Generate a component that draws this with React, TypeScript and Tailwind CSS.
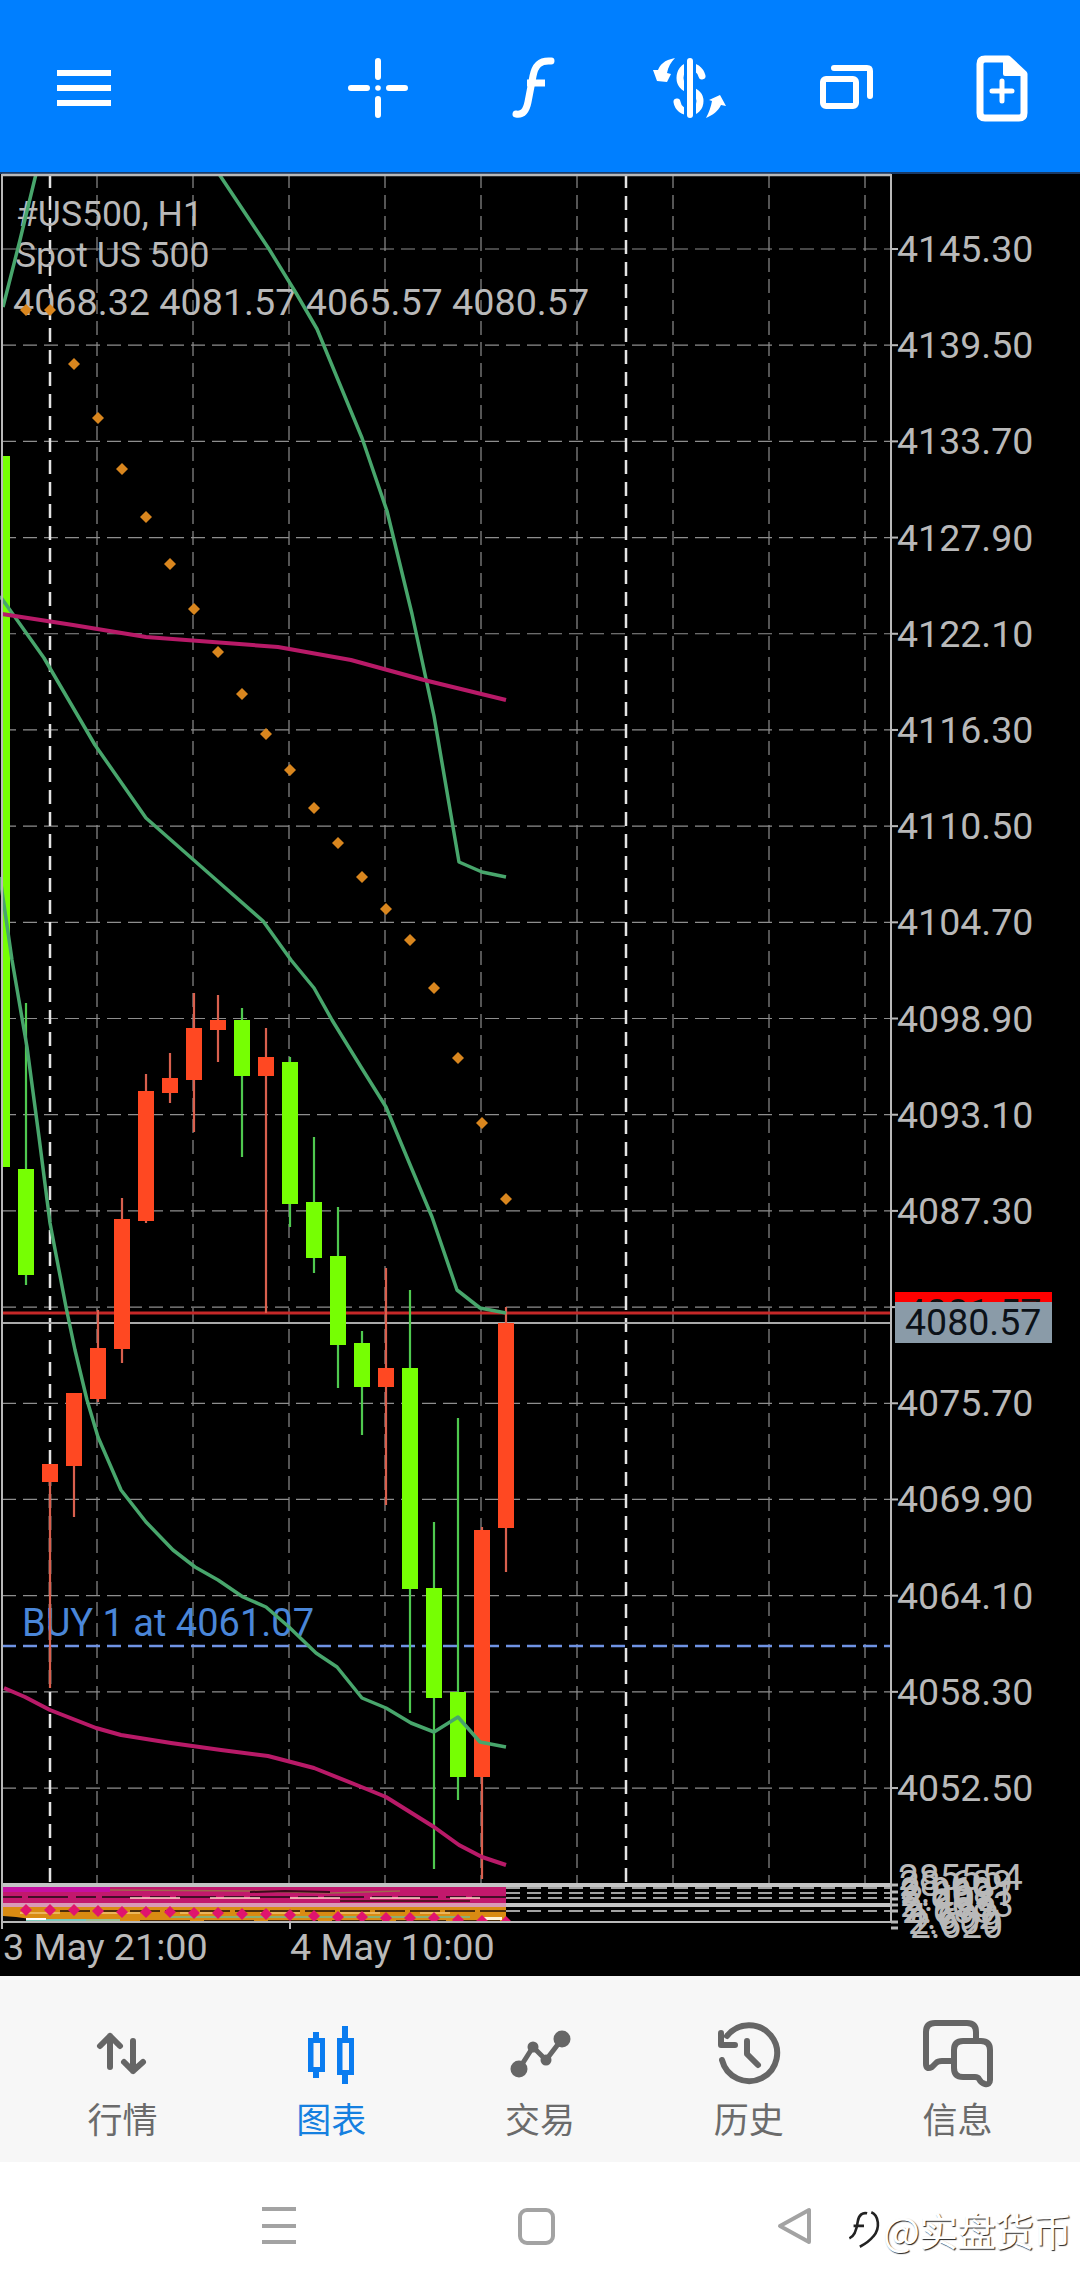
import React from 'react';

const GREEN = '#76ff03';
const RED = '#ff4822';
const GREY = '#b9b9b9';
const BAND = '#48a66c';

// x, body top, body bottom, wick top, wick bottom, up
const candles: [number, number, number, number, number, boolean][] = [
    [26, 1169, 1275, 1003, 1285, true],
    [50, 1464, 1482, 1464, 1688, false],
    [74, 1393, 1466, 1393, 1517, false],
    [98, 1348, 1399, 1310, 1402, false],
    [122, 1219, 1349, 1198, 1363, false],
    [146, 1091, 1221, 1074, 1223, false],
    [170, 1078, 1093, 1053, 1103, false],
    [194, 1028, 1080, 993, 1132, false],
    [218, 1020, 1030, 995, 1062, false],
    [242, 1020, 1076, 1008, 1157, true],
    [266, 1057, 1076, 1028, 1313, false],
    [290, 1062, 1204, 1057, 1227, true],
    [314, 1202, 1258, 1137, 1273, true],
    [338, 1256, 1345, 1207, 1388, true],
    [362, 1343, 1387, 1331, 1435, true],
    [386, 1368, 1387, 1268, 1505, false],
    [410, 1368, 1589, 1290, 1713, true],
    [434, 1588, 1698, 1522, 1869, true],
    [458, 1692, 1777, 1418, 1800, true],
    [482, 1530, 1777, 1527, 1879, false],
    [506, 1323, 1528, 1307, 1572, false],
];

const sarY = [310, 310, 364, 418, 469, 517, 564, 609, 652, 694, 734, 770, 808, 843, 877, 909, 940, 988, 1058, 1123, 1199];
const subDiamondY = [1910, 1910, 1910, 1911, 1912, 1912, 1912, 1913, 1913, 1914, 1914, 1915, 1916, 1917, 1917, 1918, 1918, 1918, 1920, 1921, 1922];

const upperBand = '3,307 20,240 36,174';
const upperBand2 = '219,174 269,249 296,293 317,329 362,438 387,511 412,614 434,716 459,862 482,872 506,877';
const midBand = '0,596 44,658 95,745 146,818 205,870 263,921 291,960 314,988 332,1020 361,1067 386,1107 411,1167 432,1217 457,1290 480,1308 506,1313';
const lowBand = '0,877 12,960 27,1047 39,1137 50,1223 66,1307 75,1350 87,1400 98,1437 121,1490 146,1522 173,1550 195,1567 218,1580 243,1597 266,1607 289,1627 316,1653 337,1667 362,1698 386,1708 411,1723 434,1732 458,1717 480,1742 506,1747';
const pinkTop = '2,614 73,625 146,637 278,647 351,660 424,680 506,700';
const pinkLow = '4,1688 25,1697 50,1710 96,1728 121,1735 171,1743 221,1750 268,1756 314,1768 364,1788 386,1797 434,1827 459,1845 482,1857 506,1865';

const gridYs = Array.from({ length: 17 }, (_, i) => 249 + i * 96.19);
const gridXs = [97, 193, 289, 385, 481, 577, 673, 769, 865];

function Chart() {
    return (
        <svg viewBox="0 172 1080 1804" className="block w-[1080px] h-[1804px] font-['Roboto',sans-serif]">
            <defs>
                <clipPath id="sub">
                    <rect x="2" y="1883" width="889" height="39" />
                </clipPath>
            </defs>
            {/* grid */}
            {gridYs.map((y) => (
                <g key={y}>
                    <line x1="2" x2="890" y1={y} y2={y} stroke="#8e8e8e" strokeWidth="1.2" strokeDasharray="14 7" />
                    <line x1="891" x2="898" y1={y} y2={y} stroke={GREY} strokeWidth="2" />
                </g>
            ))}
            {gridXs.map((x) => (
                <line key={x} x1={x} x2={x} y1="174" y2="1884" stroke="#8e8e8e" strokeWidth="1.2" strokeDasharray="14 7" />
            ))}
            {[50, 626].map((x) => (
                <line key={x} x1={x} x2={x} y1="174" y2="1884" stroke="#e4e4e4" strokeWidth="2.5" strokeDasharray="14 8" />
            ))}

            {/* legend, under the chart lines */}
            <g fill={GREY}>
                <text x="16" y="226" fontSize="35.5">#US500, H1</text>
                <text x="15" y="267" fontSize="35.5">Spot US 500</text>
                <text x="13" y="315" fontSize="37.7">4068.32 4081.57 4065.57 4080.57</text>
            </g>
            <text x="22" y="1636" fontSize="38" fill="#4a86d8">BUY 1 at 4061.07</text>

            {/* order and price lines */}
            <line x1="2" x2="890" y1="1646" y2="1646" stroke="#6f93e4" strokeWidth="2.5" strokeDasharray="14 7" />
            <line x1="2" x2="890" y1="1313" y2="1313" stroke="#c62828" strokeWidth="3" />
            <line x1="2" x2="890" y1="1323" y2="1323" stroke="#a9a9a9" strokeWidth="2" />

            {/* candles */}
            <rect x="2" y="456" width="8" height="711" fill={GREEN} />
            {candles.map(([x, top, bottom, wickTop, wickBottom, up]) => (
                <g key={x}>
                    <line x1={x} x2={x} y1={wickTop} y2={wickBottom} stroke={up ? '#4fc94f' : '#d9604e'} strokeWidth="2.2" />
                    <rect x={x - 8} y={top} width="16" height={bottom - top} fill={up ? GREEN : RED} />
                </g>
            ))}

            {/* indicators */}
            <g fill="none" strokeLinejoin="round">
                <polyline points={upperBand} stroke={BAND} strokeWidth="3.5" />
                <polyline points={upperBand2} stroke={BAND} strokeWidth="3.5" />
                <polyline points={midBand} stroke={BAND} strokeWidth="3.5" />
                <polyline points={lowBand} stroke={BAND} strokeWidth="3.5" />
                <polyline points={pinkTop} stroke="#b81a68" strokeWidth="4" />
                <polyline points={pinkLow} stroke="#b81a68" strokeWidth="4" />
            </g>
            {sarY.map((y, i) => {
                const x = 26 + i * 24;
                return <polygon key={x} points={`${x},${y - 6} ${x + 6},${y} ${x},${y + 6} ${x - 6},${y}`} fill="#d9861e" />;
            })}

            {/* sub window */}
            <g fill="none" stroke="#d8d8d8" strokeWidth="1.5" strokeDasharray="14 7">
                <line x1="506" x2="890" y1="1888" y2="1888" />
                <line x1="506" x2="890" y1="1893" y2="1893" />
                <line x1="506" x2="890" y1="1898" y2="1898" />
                <line x1="506" x2="890" y1="1911" y2="1911" />
            </g>
            <rect x="2" y="1883" width="889" height="4" fill="#c4c4c4" />
            <rect x="2" y="1903" width="889" height="4" fill="#c4c4c4" />
            <rect x="2" y="1887" width="504" height="16" fill="#c2186c" />
            <rect x="2" y="1887" width="108" height="5" fill="#c410a0" />
            <rect x="2" y="1903" width="504" height="4" fill="#d99ab6" />
            <rect x="2" y="1907" width="504" height="15" fill="#d98b12" />
            <polyline points="110,1890 250,1891 330,1893 400,1891" fill="none" stroke="#a0664e" strokeWidth="1.5" />
            <polyline points="250,1892 285,1891 330,1892" fill="none" stroke="#3a0a1a" strokeWidth="2" />
            <line x1="2" x2="506" y1="1897" y2="1897" stroke="#1a0a10" strokeWidth="1.5" strokeDasharray="20 6 40 8" />
            <line x1="130" x2="480" y1="1898" y2="1898" stroke="#ffd8c8" strokeWidth="1.5" strokeDasharray="50 30" />
            <rect x="340" y="1900" width="130" height="2" fill="#5a1028" />
            <line x1="60" x2="506" y1="1911" y2="1911" stroke="#201008" strokeWidth="1.5" strokeDasharray="30 5" />
            <line x1="20" x2="450" y1="1913" y2="1913" stroke="#ffe0a0" strokeWidth="1" strokeDasharray="40 40" />
            <polygon points="3,1921 3,1916 16,1917 45,1921" fill="#0a0a0a" />
            <rect x="26" y="1919" width="60" height="2" fill="#7cc8b8" />
            <rect x="26" y="1918" width="20" height="2" fill="#ffffff" />
            <rect x="86" y="1919" width="34" height="3" fill="#9cc090" />
            <rect x="170" y="1916" width="300" height="2" fill="#8ab070" />
            <line x1="140" x2="500" y1="1921" y2="1921" stroke="#1a0a04" strokeWidth="1.5" strokeDasharray="50 14" />
            <rect x="480" y="1917" width="22" height="3" fill="#fff4d8" />
            <g clipPath="url(#sub)">
                {subDiamondY.map((y, i) => {
                    const x = 26 + i * 24;
                    return <polygon key={x} points={`${x},${y - 6} ${x + 6},${y} ${x},${y + 6} ${x - 6},${y}`} fill="#e0146e" />;
                })}
            </g>

            {/* frame */}
            <rect x="0" y="172" width="1080" height="2" fill="#1a3a66" />
            <line x1="2" x2="891" y1="175" y2="175" stroke={GREY} strokeWidth="2.5" />
            <line x1="2" x2="2" y1="174" y2="1923" stroke={GREY} strokeWidth="2" />
            <line x1="891" x2="891" y1="174" y2="1923" stroke={GREY} strokeWidth="2" />
            <line x1="2" x2="891" y1="1922" y2="1922" stroke={GREY} strokeWidth="2" />
            <line x1="2" x2="2" y1="1923" y2="1929" stroke={GREY} strokeWidth="2" />
            <line x1="290" x2="290" y1="1923" y2="1929" stroke={GREY} strokeWidth="2" />
            {[1885, 1892, 1899, 1905, 1911, 1922, 1928].map((y) => (
                <line key={y} x1="891" x2="898" y1={y} y2={y} stroke={GREY} strokeWidth="3" />
            ))}

            {/* price axis */}
            <g fontSize="37.5" fill={GREY}>
                {gridYs.map((y, i) =>
                    i === 11 ? null : (
                        <text key={y} x="897" y={y + 13}>
                            {(4145.3 - i * 5.8).toFixed(2)}
                        </text>
                    ),
                )}
            </g>
            <g fontSize="37" fill={GREY}>
                <text x="898" y="1890">285554</text>
                <text x="899" y="1896">28.609</text>
                <text x="900" y="1903">2.969</text>
                <text x="900" y="1906">2.6691</text>
                <text x="903" y="1911">2.408</text>
                <text x="900" y="1917">2.9683</text>
                <text x="902" y="1923">2.683</text>
                <text x="906" y="1929">4.692</text>
                <text x="908" y="1934">2.609</text>
                <text x="910" y="1938">2.620</text>
            </g>

            {/* price tags */}
            <rect x="895" y="1292" width="157" height="40" fill="#ff0000" />
            <text x="905" y="1325" fontSize="37.5" fill="#111">4081.57</text>
            <rect x="895" y="1302" width="157" height="41" fill="#8a9ba8" />
            <text x="905" y="1335" fontSize="37.5" fill="#0c1218">4080.57</text>

            {/* time axis */}
            <g fontSize="37.7" fill={GREY}>
                <text x="3" y="1960">3 May 21:00</text>
                <text x="290" y="1960">4 May 10:00</text>
            </g>
        </svg>
    );
}

function Header() {
    return (
        <header className="flex items-center h-[172px] pt-[4px] pl-[57px] bg-[#007fff]">
            <svg viewBox="57 52 54 72" className="w-[54px] h-[72px] fill-white">
                <rect x="57" y="70" width="54" height="6" />
                <rect x="57" y="85" width="54" height="6" />
                <rect x="57" y="100" width="54" height="6" />
            </svg>
            <svg viewBox="346 52 64 72" className="ml-[235px] w-[64px] h-[72px]" fill="none" stroke="#fff" strokeWidth="6" strokeLinecap="round">
                <path d="M351 88H367M389 88H405M378 61V77M378 99V115" />
                <circle cx="378" cy="88" r="2.8" fill="#fff" stroke="none" />
            </svg>
            <svg viewBox="510 52 48 72" className="ml-[100px] w-[48px] h-[72px]" fill="none" stroke="#fff" strokeWidth="7" strokeLinecap="round">
                <path d="M551 61C540 60 535 65 533 76L528 102C526 112 522 115 516 114" />
                <path d="M527 83H545" strokeLinecap="butt" />
            </svg>
            <svg viewBox="650 52 80 72" className="ml-[92px] w-[80px] h-[72px]" fill="none" strokeLinecap="round">
                <path d="M702 76C700 69 694 66 690 66C684 66 680 72 680 78C680 85 684 88 690 90C697 92 700 96 700 101C700 108 695 112 690 112C683 112 678 108 677 102" stroke="#fff" strokeWidth="7" />
                <path d="M690 58V118" stroke="#007fff" strokeWidth="12" strokeLinecap="butt" />
                <path d="M690 61V115" stroke="#fff" strokeWidth="6" />
                <path d="M675 58C664 60 660 65 658 70L653 70L657 81L667 82L671 74L667 73C668 67 671 62 675 58Z" fill="#fff" />
                <path d="M706 118C709 112 711 107 712 101L709 100L720 95L726 106L721 105C718 111 713 115 706 118Z" fill="#fff" />
            </svg>
            <svg viewBox="818 52 58 72" className="ml-[88px] w-[58px] h-[72px]" fill="none" stroke="#fff" strokeWidth="6" strokeLinecap="round" strokeLinejoin="round">
                <rect x="823" y="79" width="33" height="27" rx="3" />
                <path d="M834 68H867Q870 68 870 71V96" />
            </svg>
            <svg viewBox="974 52 56 72" className="ml-[98px] w-[56px] h-[72px]" fill="none" stroke="#fff" strokeLinecap="round" strokeLinejoin="round">
                <path d="M985 59H1008L1024 74V113Q1024 118 1019 118H985Q980 118 980 113V64Q980 59 985 59Z" strokeWidth="7" />
                <path d="M1005 59V74H1024Z" fill="#fff" strokeWidth="4" />
                <path d="M992 91H1012M1002 81V101" strokeWidth="5" />
            </svg>
        </header>
    );
}

function TabIcon({ viewBox, children, color = '#666666' }: { viewBox: string; children: React.ReactNode; color?: string }) {
    return (
        <svg viewBox={viewBox} className="w-[90px] h-[70px]" fill="none" stroke={color} strokeWidth="6" strokeLinecap="round" strokeLinejoin="round">
            {children}
        </svg>
    );
}

function Tab({ label, active, children }: { label: string; active?: boolean; children: React.ReactNode }) {
    return (
        <div className="flex flex-col items-center flex-1">
            {children}
            <span className={`mt-[8px] text-[35px] leading-[40px] font-['Noto_Sans_CJK_SC',sans-serif] ${active ? 'text-[#1580e0]' : 'text-[#6b6b6b]'}`}>
                {label}
            </span>
        </div>
    );
}

function TabBar() {
    return (
        <nav className="flex h-[186px] pt-[44px] px-[18px] bg-[#f7f7f7]">
            <Tab label="行情">
                <TabIcon viewBox="77 2020 90 70">
                    <path d="M110 2067V2036M100 2046L110 2036L120 2046" />
                    <path d="M133 2041V2071M124 2062L133 2071L143 2062" />
                </TabIcon>
            </Tab>
            <Tab label="图表" active>
                <TabIcon viewBox="286 2020 90 70" color="#0a7cf0">
                    <g fill="#0a7cf0" stroke="none">
                        <rect x="313" y="2032" width="6" height="46" />
                        <rect x="308" y="2038" width="17" height="34" />
                        <rect x="342" y="2026" width="6" height="58" />
                        <rect x="337" y="2038" width="17" height="37" />
                    </g>
                    <g fill="#f7f7f7" stroke="none">
                        <rect x="313.5" y="2043" width="6.5" height="24" />
                        <rect x="342.5" y="2043" width="6.5" height="27" />
                    </g>
                </TabIcon>
            </Tab>
            <Tab label="交易">
                <TabIcon viewBox="495 2020 90 70">
                    <polyline points="519,2069 533,2047 546,2060 562,2039" strokeWidth="5" />
                    <g fill="#666666" stroke="none">
                        <circle cx="519" cy="2069" r="8.5" />
                        <circle cx="533" cy="2047" r="5.5" />
                        <circle cx="546" cy="2060" r="5.5" />
                        <circle cx="562" cy="2039" r="8.5" />
                    </g>
                </TabIcon>
            </Tab>
            <Tab label="历史">
                <TabIcon viewBox="704 2020 90 70">
                    <path d="M722 2060A28 28 0 1 0 727 2036" />
                    <path d="M721 2033V2045H735" />
                    <path d="M747 2041V2054L758 2065" />
                </TabIcon>
            </Tab>
            <Tab label="信息">
                <TabIcon viewBox="913 2020 90 70">
                    <path d="M976 2040V2032Q976 2023 967 2023H935Q926 2023 926 2032V2064Q926 2070 932 2067L936 2063Q938 2061 942 2061H954" />
                    <path d="M963 2041H981Q990 2041 990 2050V2080Q990 2085 985 2084Q981 2083 979 2079Q978 2077 975 2077H963Q954 2077 954 2068V2050Q954 2041 963 2041Z" />
                </TabIcon>
            </Tab>
        </nav>
    );
}

function SystemBar() {
    return (
        <div className="relative flex items-center h-[131px] pl-[262px] pb-[4px] bg-white">
            <svg viewBox="262 2205 34 46" className="w-[34px] h-[46px]" stroke="#a3a3a3" strokeWidth="4">
                <path d="M262 2211H296M262 2228H296M262 2244H296" />
            </svg>
            <svg viewBox="518 2205 38 46" className="ml-[222px] w-[38px] h-[46px]" fill="none" stroke="#a3a3a3" strokeWidth="4">
                <rect x="520" y="2212" width="33" height="33" rx="7" />
            </svg>
            <svg viewBox="775 2205 40 46" className="ml-[219px] w-[40px] h-[46px]" fill="none" stroke="#a3a3a3" strokeWidth="4" strokeLinejoin="round">
                <path d="M780 2228L809 2212V2244Z" />
            </svg>
            {/* watermark */}
            <div className="absolute left-[846px] top-[43px] flex items-center text-white [text-shadow:1px_1px_1px_#222]">
                <svg viewBox="0 0 34 46" className="w-[36px] h-[48px]" fill="none" stroke="#222" strokeWidth="2.5">
                    <path d="M3 32C8 30 10 24 11 16C12 9 16 7 20 8M7 20H17" />
                    <path d="M24 7C31 10 33 22 26 30C22 35 17 38 13 40" />
                </svg>
                <span className="ml-[1px] text-[39px] leading-[46px] tracking-[-1px] font-['Noto_Sans_CJK_SC',sans-serif]">@实盘货币</span>
            </div>
        </div>
    );
}

export default function App() {
    return (
        <div className="flex flex-col w-[1080px] h-[2293px] font-['Roboto',sans-serif]">
            <Header />
            <main className="bg-black h-[1804px]">
                <Chart />
            </main>
            <TabBar />
            <SystemBar />
        </div>
    );
}
